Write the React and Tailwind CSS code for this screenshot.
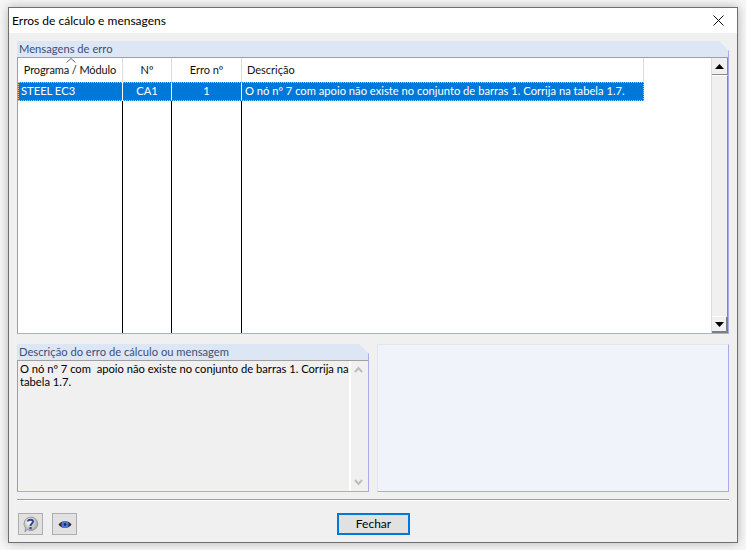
import React from "react";

function Arrow({ dir = "up" }) {
  return (
    <svg width="9" height="5" viewBox="0 0 9 5" className="block">
      <path d={dir === "up" ? "M0 5 L4.5 0 L9 5 Z" : "M0 0 L9 0 L4.5 5 Z"} fill="#000" />
    </svg>
  );
}

function Chevron({ dir }) {
  return (
    <svg width="9" height="7" viewBox="0 0 9 7" className="block">
      <path d={dir === "up" ? "M1 6 L4.5 2 L8 6" : "M1 1 L4.5 5 L8 1"} fill="none" stroke="#bdbdbd" strokeWidth="2" />
    </svg>
  );
}

function GroupHeader({ children }) {
  return (
    <div className="h-[16px] shrink-0 bg-[#dce6f5] border-r border-[#a9a9ec] [clip-path:polygon(0_0,calc(100%-10px)_0,100%_10px,100%_100%,0_100%)] pl-[2px] text-[11.2px] leading-[15px] text-[#3c4f78] whitespace-nowrap">
      {children}
    </div>
  );
}

function Th({ w, children }) {
  return (
    <div className={`${w} border-r border-[#dcdcdc] shrink-0 flex items-center justify-center whitespace-nowrap pt-[1px]`}>
      {children}
    </div>
  );
}

function Td({ w, children, left }) {
  return (
    <div className={`${w} shrink-0 border-r border-white flex items-center ${left ? "pl-[3px]" : "justify-center"}`}>
      {children}
    </div>
  );
}

function BodyCol({ w }) {
  return <div className={`${w} shrink-0 border-r border-black`} />;
}

export default function App() {
  return (
    <div className="w-[746px] h-[550px] bg-[#f7f7f7] pl-[8px] pt-[7px] overflow-hidden font-['Lato','Roboto',sans-serif] text-[11.2px] text-black">
      <div className="w-[730px] h-[536px] border border-[#6f6f6f] bg-[#f0f0f0] shadow-[0_0_10px_rgba(0,0,0,0.28)] flex flex-col">
        <div className="h-[25px] shrink-0 bg-white flex items-center justify-between pl-[3px] pr-[13px] text-black text-[12px]">
          <span>Erros de cálculo e mensagens</span>
          <svg width="11" height="11" viewBox="0 0 11 11" className="block">
            <path d="M0.5 0.5 L10.5 10.5 M10.5 0.5 L0.5 10.5" stroke="#111" strokeWidth="1" />
          </svg>
        </div>

        <div className="flex-1 flex flex-col px-[8px] pt-[8px]">
          <div className="h-[293px] shrink-0 flex flex-col">
            <GroupHeader>Mensagens de erro</GroupHeader>
            <div className="flex-1 border-t border-l border-t-[#a0a0a0] border-l-[#a0a0a0] border-b border-r border-b-[#a9a9ec] border-r-[#a9a9ec] bg-white flex min-h-0">
              <div className="w-[693px] shrink-0 flex flex-col min-h-0">
                <div className="h-[24px] shrink-0 flex relative text-[#111] text-[11px]">
                  <Th w="w-[105px]"><span className="tracking-[-0.1px]">Programa / Módulo</span></Th>
                  <Th w="w-[49px]">Nº</Th>
                  <Th w="w-[70px]">Erro nº</Th>
                  <div className="w-[402px] shrink-0 border-r border-[#dcdcdc] flex items-center pl-[5px] pt-[1px]">Descrição</div>
                  <svg width="10" height="5" viewBox="0 0 10 5" className="absolute left-[48px] top-[0px] block">
                    <path d="M0.5 4.5 L5 0.5 L9.5 4.5" fill="none" stroke="#666" />
                  </svg>
                </div>
                <div className="h-[19px] shrink-0 flex bg-[#0078d7] text-white outline-1 -outline-offset-1 outline-dotted outline-[#e9b98a] w-[626px]">
                  <Td w="w-[105px]" left>STEEL EC3</Td>
                  <Td w="w-[49px]">CA1</Td>
                  <Td w="w-[70px]">1</Td>
                  <div className="flex-1 flex items-center pl-[3px] whitespace-nowrap">
                    O nó nº 7 com apoio não existe no conjunto de barras 1. Corrija na tabela 1.7.
                  </div>
                </div>
                <div className="flex-1 flex">
                  <BodyCol w="w-[105px]" />
                  <BodyCol w="w-[49px]" />
                  <BodyCol w="w-[70px]" />
                </div>
              </div>
              <div className="w-[17px] shrink-0 flex flex-col bg-[#f0f0f0] border-l border-[#dcdcdc]">
                <div className="h-[17px] shrink-0 bg-[#f0f0f0] border-r border-b border-r-[#8a8a8a] border-b-[#8a8a8a] flex items-center justify-center">
                  <Arrow dir="up" />
                </div>
                <div className="flex-1 bg-[#f0f0f0] border-r border-r-[#8a8a8a] border-t border-t-white" />
                <div className="h-[17px] shrink-0 bg-[#f0f0f0] border-r-2 border-b-2 border-[#7f7f7f] border-t border-t-white flex items-center justify-center">
                  <Arrow dir="down" />
                </div>
              </div>
            </div>
          </div>

          <div className="h-[148px] shrink-0 mt-[10px] flex gap-[8px]">
            <div className="w-[352px] shrink-0 flex flex-col">
              <GroupHeader>Descrição do erro de cálculo ou mensagem</GroupHeader>
              <div className="flex-1 flex min-h-0 border-t border-l border-t-[#a0a0a0] border-l-[#a0a0a0] border-r border-b border-r-[#a9a9ec] border-b-[#a9a9ec]">
                <div className="flex-1 min-w-0 pl-[2px] pt-[1px] leading-[13px] text-black whitespace-nowrap">
                  O nó nº 7 com&nbsp; apoio não existe no conjunto de barras 1. Corrija na
                  <br />
                  tabela 1.7.
                </div>
                <div className="w-[19px] shrink-0 border-l-2 border-white flex flex-col justify-between items-center pt-[5px] pb-[5px] pr-[2px]">
                  <Chevron dir="up" />
                  <Chevron dir="down" />
                </div>
              </div>
            </div>
            <div className="flex-1 bg-[#f0f3f9] border-t border-l border-t-[#dce6f5] border-l-[#dce6f5] border-r border-b border-r-[#a9a9ec] border-b-[#a9a9ec]" />
          </div>

          <div className="h-[2px] shrink-0 mt-[7px] bg-[#a0a0a0] border-b border-white" />

          <div className="relative mt-[12px] flex items-start h-[23px] pl-[1px]">
            <button className="w-[25px] h-[22px] bg-[#e1e1e1] border border-[#adadad] flex items-center justify-center">
              <svg width="17" height="17" viewBox="0 0 17 17" className="block">
                <defs>
                  <radialGradient id="q" cx="40%" cy="35%" r="70%">
                    <stop offset="0%" stopColor="#ffffff" />
                    <stop offset="100%" stopColor="#9a9a9a" />
                  </radialGradient>
                </defs>
                <path d="M8.5 1 A7 6.8 0 1 1 5 13.5 L3 16 L3.5 12 A7 6.8 0 0 1 8.5 1 Z" fill="url(#q)" stroke="#8d8d8d" strokeWidth="0.8" />
                <path d="M6 5.5 C6 3 11 3 11 5.5 C11 7.5 8.5 7.5 8.5 10" fill="none" stroke="#33468f" strokeWidth="2" />
                <rect x="7.4" y="11" width="2.2" height="2.2" fill="#33468f" />
              </svg>
            </button>
            <button className="ml-[9px] w-[25px] h-[22px] bg-[#e1e1e1] border border-[#adadad] flex items-center justify-center">
              <svg width="14" height="11" viewBox="0 0 14 11" className="block">
                <path d="M0.5 5.5 C3 1 11 1 13.5 5.5 C11 10 3 10 0.5 5.5 Z" fill="#2e2e2e" />
                <circle cx="7" cy="5.5" r="3.6" fill="#4a78e0" />
                <circle cx="7" cy="5.5" r="1.3" fill="#10204a" />
              </svg>
            </button>
            <button className="absolute left-[320px] top-0 w-[73px] h-[22px] bg-[#e1e1e1] border-2 border-[#0078d7] flex items-center justify-center text-[12px] text-black">
              Fechar
            </button>
          </div>
        </div>
      </div>
    </div>
  );
}
